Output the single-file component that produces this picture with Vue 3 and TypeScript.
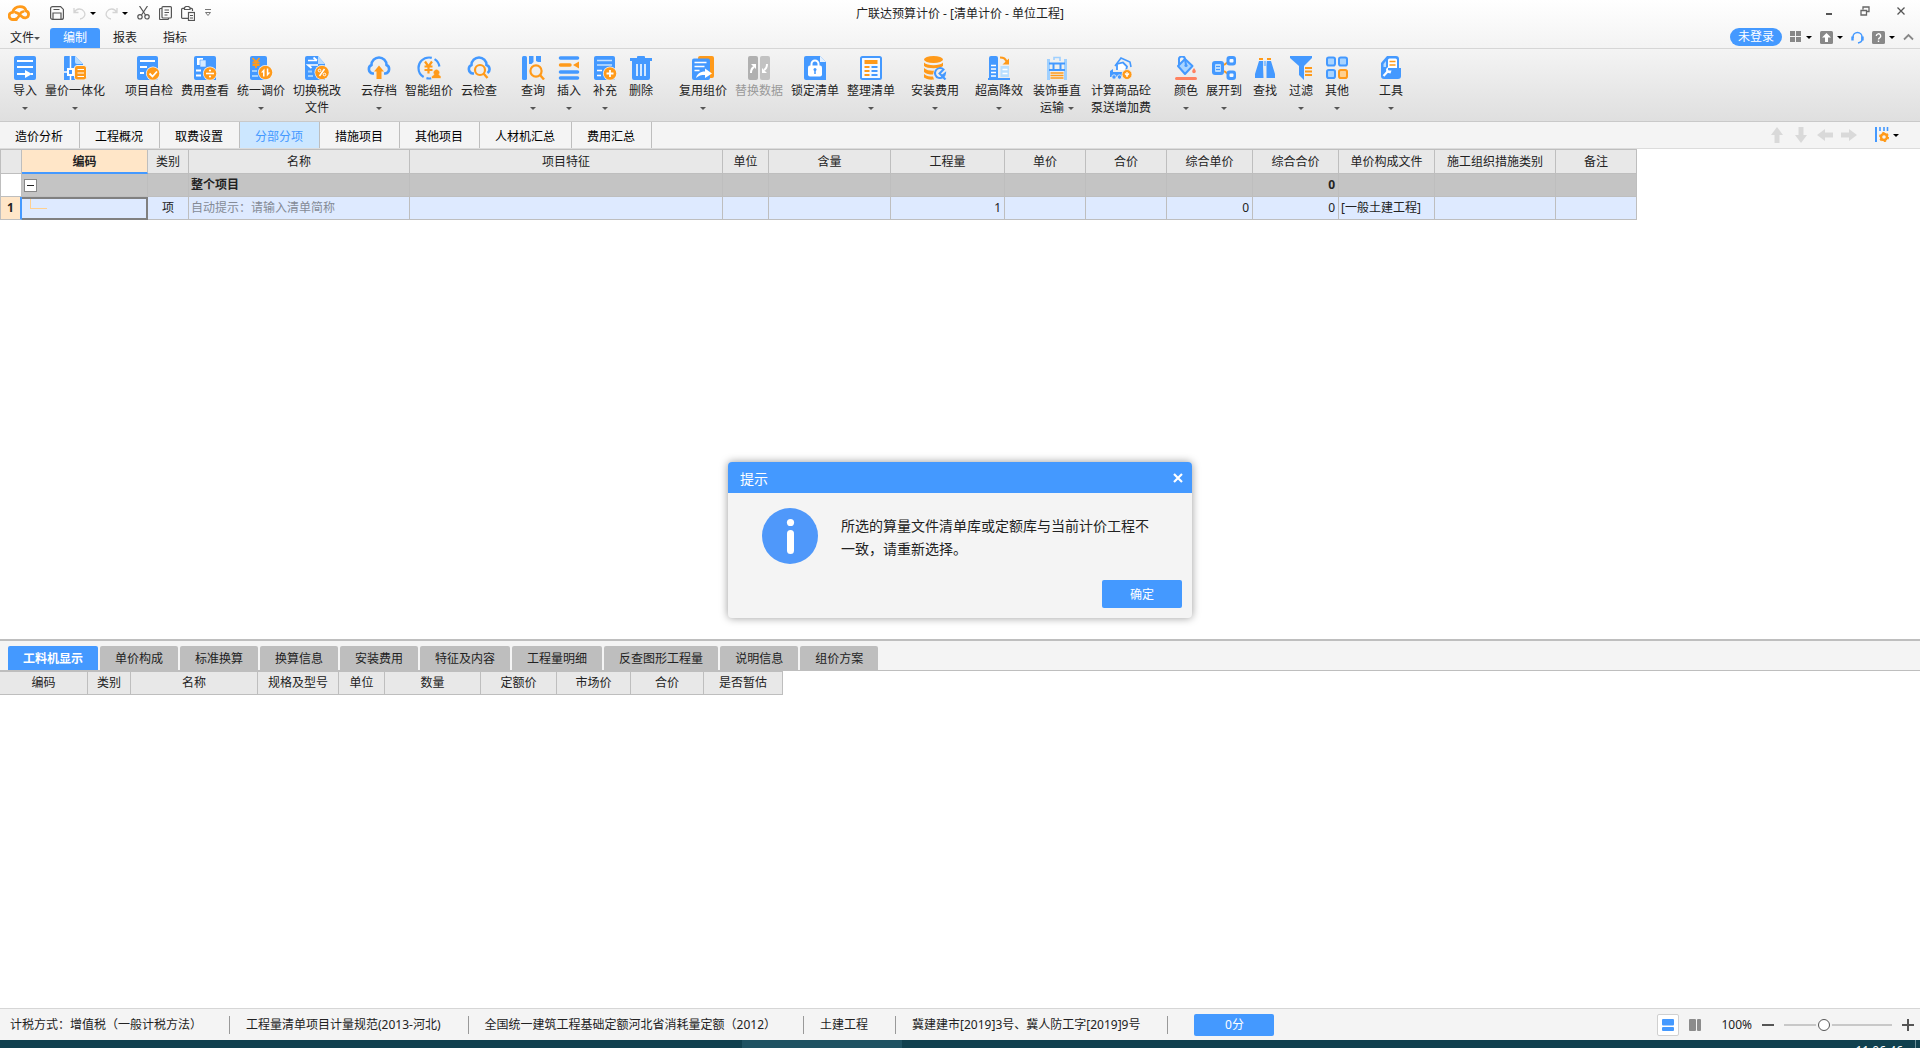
<script setup lang="ts">
import { ref } from 'vue'

interface Tool {
  icon: string
  label: string
  second?: string
  caret?: boolean
  off?: boolean
}

interface ToolGroup {
  gap: string
  tools: Tool[]
}

interface Column {
  label: string
  width: number
}

const menus = ['编制', '报表', '指标']
const activeMenu = ref('编制')

const groups: ToolGroup[] = [
  {
    gap: 'tight',
    tools: [
      { icon: 'import', label: '导入', caret: true },
      { icon: 'quantity', label: '量价一体化', caret: true },
    ],
  },
  {
    gap: 'tight',
    tools: [
      { icon: 'selfcheck', label: '项目自检' },
      { icon: 'feeview', label: '费用查看' },
      { icon: 'adjust', label: '统一调价', caret: true },
      { icon: 'tax', label: '切换税改', second: '文件' },
    ],
  },
  {
    gap: 'tight',
    tools: [
      { icon: 'cloudsave', label: '云存档', caret: true },
      { icon: 'smart', label: '智能组价' },
      { icon: 'cloudcheck', label: '云检查' },
    ],
  },
  {
    gap: 'wide',
    tools: [
      { icon: 'query', label: '查询', caret: true },
      { icon: 'insert', label: '插入', caret: true },
      { icon: 'append', label: '补充', caret: true },
      { icon: 'trash', label: '删除' },
    ],
  },
  {
    gap: 'tight',
    tools: [
      { icon: 'reuse', label: '复用组价', caret: true },
      { icon: 'replace', label: '替换数据', off: true },
      { icon: 'lock', label: '锁定清单' },
      { icon: 'arrange', label: '整理清单', caret: true },
    ],
  },
  { gap: 'tight', tools: [{ icon: 'install', label: '安装费用', caret: true }] },
  {
    gap: 'medium',
    tools: [
      { icon: 'height', label: '超高降效', caret: true },
      { icon: 'vertical', label: '装饰垂直', second: '运输', caret: true },
      { icon: 'concrete', label: '计算商品砼', second: '泵送增加费' },
    ],
  },
  {
    gap: 'tight',
    tools: [
      { icon: 'color', label: '颜色', caret: true },
      { icon: 'expand', label: '展开到', caret: true },
    ],
  },
  {
    gap: 'wide',
    tools: [
      { icon: 'find', label: '查找' },
      { icon: 'filter', label: '过滤', caret: true },
      { icon: 'other', label: '其他', caret: true },
    ],
  },
  { gap: 'tight', tools: [{ icon: 'toolbox', label: '工具', caret: true }] },
]

const modules = ['造价分析', '工程概况', '取费设置', '分部分项', '措施项目', '其他项目', '人材机汇总', '费用汇总']
const activeModule = ref('分部分项')

const columns: Column[] = [
  { label: '', width: 21 },
  { label: '编码', width: 126 },
  { label: '类别', width: 41 },
  { label: '名称', width: 221 },
  { label: '项目特征', width: 313 },
  { label: '单位', width: 46 },
  { label: '含量', width: 122 },
  { label: '工程量', width: 114 },
  { label: '单价', width: 81 },
  { label: '合价', width: 81 },
  { label: '综合单价', width: 86 },
  { label: '综合合价', width: 86 },
  { label: '单价构成文件', width: 96 },
  { label: '施工组织措施类别', width: 121 },
  { label: '备注', width: 81 },
]

const details = ['工料机显示', '单价构成', '标准换算', '换算信息', '安装费用', '特征及内容', '工程量明细', '反查图形工程量', '说明信息', '组价方案']
const activeDetail = ref('工料机显示')

const detailColumns: Column[] = [
  { label: '编码', width: 88 },
  { label: '类别', width: 43 },
  { label: '名称', width: 127 },
  { label: '规格及型号', width: 81 },
  { label: '单位', width: 46 },
  { label: '数量', width: 96 },
  { label: '定额价', width: 76 },
  { label: '市场价', width: 74 },
  { label: '合价', width: 73 },
  { label: '是否暂估', width: 79 },
]

const statuses = [
  '计税方式：增值税（一般计税方法）',
  '工程量清单项目计量规范(2013-河北)',
  '全国统一建筑工程基础定额河北省消耗量定额（2012）',
  '土建工程',
  '冀建建市[2019]3号、冀人防工字[2019]9号',
]

const showDialog = ref(true)
const zoomLevel = ref(35)
</script>

<template>
  <svg class="sheet" aria-hidden="true">
    <defs>
      <symbol id="i-import" viewBox="0 0 24 24">
        <rect x="1" width="22" height="24" rx="2" fill="#49f" />
        <path d="M4 5h16M4 11h16" stroke="#fff" stroke-width="2" />
        <path d="M4 18h9M18 18h2" stroke="#fff" stroke-width="2" />
        <path d="M12 14l7 4-7 4z" fill="#fff" />
      </symbol>
      <symbol id="i-quantity" viewBox="0 0 24 24">
        <path d="M1 1a1 1 0 0 1 1-1h10l8 8v16H1z" fill="#49f" />
        <path d="M12 0l8 8h-6a2 2 0 0 1-2-2z" fill="#b9dcff" />
        <path d="M7.500 0v24M1 16h12" stroke="#fff" stroke-width="1.500" />
        <path d="M4 12h7v8H4z" fill="#fff" />
        <path d="M6 14h3v4H6z" fill="#49f" />
        <rect x="11.500" y="9.500" width="12" height="14.500" rx="2.500" fill="#ff9a1a" stroke="#f2f2f2" />
        <path d="M14.500 13.500h6.500M14.500 17h6.500M14.500 20.500h6.500" stroke="#fff" stroke-width="1.200" />
      </symbol>
      <symbol id="i-selfcheck" viewBox="0 0 24 24">
        <rect width="21" height="24" rx="2" fill="#49f" />
        <path d="M3 5h15M3 11h7M3 17h4" stroke="#fff" stroke-width="2" />
        <circle cx="16" cy="17.500" r="7" fill="#f2f2f2" />
        <circle cx="16" cy="17.500" r="6.300" fill="#ff9a1a" />
        <path d="M12.500 17.500l3 3 4.500-5" fill="none" stroke="#fff" stroke-width="1.800" />
      </symbol>
      <symbol id="i-feeview" viewBox="0 0 24 24">
        <path d="M3 0h18a2 2 0 0 1 2 2v22H3a2 2 0 0 1-2-2V2a2 2 0 0 1 2-2z" fill="#49f" />
        <path d="M4 2h6v7H4z" fill="#fff" />
        <path d="M7 4h6v7H7z" fill="#d5eaff" stroke="#49f" stroke-width=".6" />
        <path d="M3 14.500h5M3 19.500h5" stroke="#fff" stroke-width="2" />
        <circle cx="17" cy="17.500" r="7" fill="#f2f2f2" />
        <circle cx="17" cy="17.500" r="6.300" fill="#ff9a1a" />
        <path d="M13 17.500h8" stroke="#fff" stroke-width="1.600" />
        <circle cx="17" cy="14.500" r="1.100" fill="#fff" />
        <circle cx="17" cy="20.500" r="1.100" fill="#fff" />
      </symbol>
      <symbol id="i-adjust" viewBox="0 0 24 24">
        <rect x="1" width="17" height="24" rx="2" fill="#49f" />
        <path d="M3.500 2l3.500 4 3.500-4M3.500 6.500h7M3.500 9h7M7 6v6" fill="none" stroke="#ff9a1a" stroke-width="1.800" />
        <path d="M3 15h5M3 20h6" stroke="#9fd0ff" stroke-width="2" />
        <circle cx="16.500" cy="16.500" r="7.500" fill="#f2f2f2" />
        <circle cx="16.500" cy="16.500" r="6.800" fill="#ff9a1a" />
        <path d="M15.500 12.500v8h-1.500v-4h-2zM17.800 20.500v-8h1.500v4h2z" fill="#fff" />
      </symbol>
      <symbol id="i-tax" viewBox="0 0 24 24">
        <path d="M0 2a2 2 0 0 1 2-2h11l7 8v16H2a2 2 0 0 1-2-2z" fill="#49f" />
        <path d="M13 0l7 8h-7z" fill="#b9dcff" />
        <path d="M3 4.500h9M8.500 1.500l3.500 3M13 9H3l3.500 3" fill="none" stroke="#fff" stroke-width="1.700" />
        <path d="M3 15.500h4M3 20h5" stroke="#9fd0ff" stroke-width="2" />
        <circle cx="17" cy="16.500" r="7.500" fill="#f2f2f2" />
        <circle cx="17" cy="16.500" r="6.800" fill="#ff9a1a" />
        <path d="M14.500 20l5-7" stroke="#fff" stroke-width="1.500" />
        <circle cx="14.500" cy="14.500" r="1.300" fill="none" stroke="#fff" />
        <circle cx="19.500" cy="18.500" r="1.300" fill="none" stroke="#fff" />
      </symbol>
      <symbol id="i-cloudsave" viewBox="0 0 24 24">
        <path d="M7 17.500H5.500A4.500 4.500 0 0 1 4.500 9 7.500 7.500 0 0 1 19.500 9a4.500 4.500 0 0 1-1 8.500H17" fill="none" stroke="#49f" stroke-width="2.600" />
        <path d="M12 9.500l5 6h-2.500V23h-5v-7.500H7z" fill="#ff9a1a" />
      </symbol>
      <symbol id="i-smart" viewBox="0 0 24 24">
        <circle cx="12" cy="12" r="10.500" fill="none" stroke="#49f" stroke-width="2.200" stroke-dasharray="0 14 5 3 30 3 9 2" />
        <path d="M8 5.500l3.500 5 3.500-5M7.500 10.500h8M7.500 14h8M11.500 10v7.500" fill="none" stroke="#ff9a1a" stroke-width="2.200" />
        <path d="M14.500 22.500v-2l2.500-2a3.200 3.200 0 1 1 5 0l2 2v2z" fill="#ff9a1a" stroke="#f0f0f0" stroke-width=".6" />
      </symbol>
      <symbol id="i-cloudcheck" viewBox="0 0 24 24">
        <path d="M7 17.500H5.500A4.500 4.500 0 0 1 4.500 9 7.500 7.500 0 0 1 19.500 9a4.500 4.500 0 0 1 1 8" fill="none" stroke="#49f" stroke-width="2.600" />
        <circle cx="13" cy="14" r="5" fill="none" stroke="#ff9a1a" stroke-width="2.200" />
        <path d="M16.500 17.500l4 4.500" stroke="#ff9a1a" stroke-width="2.400" />
      </symbol>
      <symbol id="i-query" viewBox="0 0 24 24">
        <rect x="1" width="5" height="24" rx="1.500" fill="#49f" />
        <path d="M8 0h4.500v6l-2 2H8zM15 0h5v6h-3l-2-1z" fill="#49f" />
        <circle cx="15" cy="15" r="5.600" fill="none" stroke="#ff9a1a" stroke-width="2.200" />
        <path d="M19 19l4 4.500" stroke="#ff9a1a" stroke-width="2.400" />
      </symbol>
      <symbol id="i-insert" viewBox="0 0 24 24">
        <path d="M3.500 2h17M3.500 16h17M3.500 22h17" stroke="#49f" stroke-width="3.600" stroke-linecap="round" />
        <path d="M3.500 9H13" stroke="#ff9a1a" stroke-width="3.400" stroke-linecap="round" />
        <path d="M16 9l6-3.500v7z" fill="#ff9a1a" />
      </symbol>
      <symbol id="i-append" viewBox="0 0 24 24">
        <rect x="1" width="21" height="24" rx="2" fill="#49f" />
        <path d="M4 4.500h15M4 9h15" stroke="#c5e2ff" stroke-width="1.600" />
        <path d="M4 14.500h5M4 19.500h4" stroke="#fff" stroke-width="1.600" />
        <circle cx="17" cy="17.500" r="7" fill="#f2f2f2" />
        <circle cx="17" cy="17.500" r="6.300" fill="#ff9a1a" />
        <path d="M13.500 17.500h7M17 14v7" stroke="#fff" stroke-width="1.800" />
      </symbol>
      <symbol id="i-trash" viewBox="0 0 24 24">
        <path d="M8 2V1a1 1 0 0 1 1-1h6a1 1 0 0 1 1 1v1h7v3H1V2zM3 5h18v17a2 2 0 0 1-2 2H5a2 2 0 0 1-2-2z" fill="#49f" />
        <path d="M8 8v12M12 8v12M16 8v12" stroke="#e4f1ff" stroke-width="1.800" />
      </symbol>
      <symbol id="i-reuse" viewBox="0 0 24 24">
        <rect x="7" width="16" height="22" rx="2" fill="#ff9a1a" />
        <rect x="1" y="2.500" width="18" height="21.500" rx="2" fill="#49f" />
        <path d="M3.500 6.500h12M3.500 10.500h10M3.500 14.500h5" stroke="#fff" stroke-width="1.600" />
        <path d="M5 22c1-4 4-6.500 9-6.500V12.500l7 5-7 4.500v-3c-4 0-6 .5-9 3z" fill="#fff" />
      </symbol>
      <symbol id="i-replace" viewBox="0 0 24 24">
        <rect x="1" width="10" height="24" rx="2" fill="#b0b0b0" />
        <rect x="13" width="10" height="24" rx="2" fill="#c2c2c2" />
        <path d="M4 17c0-4 1-5 3-6M20 8c0 4-1 5-3 6" fill="none" stroke="#fff" stroke-width="2" />
        <path d="M4 8h5v5zM15 17v-5l5 5z" fill="#fff" />
      </symbol>
      <symbol id="i-lock" viewBox="0 0 24 24">
        <path d="M1 2a2 2 0 0 1 2-2h14l6 6v18H3a2 2 0 0 1-2-2z" fill="#49f" />
        <path d="M17 0l6 6h-6z" fill="#e4f1ff" />
        <path d="M8.500 10V8a3.500 3.500 0 0 1 7 0v2" fill="none" stroke="#fff" stroke-width="2" />
        <rect x="5" y="9.500" width="14" height="11" rx="2" fill="#fff" />
        <circle cx="12" cy="13.500" r="1.500" fill="#49f" />
        <path d="M12 14v4" stroke="#49f" stroke-width="1.500" />
      </symbol>
      <symbol id="i-arrange" viewBox="0 0 24 24">
        <rect x="2" y="1" width="20" height="22" rx="1.500" fill="#f4f9ff" stroke="#49f" stroke-width="2" />
        <path d="M5.500 6h13" stroke="#ff9a1a" stroke-width="4" />
        <path d="M5.500 11h5M5.500 15h5M5.500 19h5" stroke="#ff9a1a" stroke-width="2" />
        <path d="M12.500 11h6M12.500 15h6M12.500 19h6" stroke="#49f" stroke-width="2" />
      </symbol>
      <symbol id="i-install" viewBox="0 0 24 24">
        <ellipse cx="10.500" cy="3.500" rx="9.500" ry="3.500" fill="#ff9a1a" />
        <path d="M1 6.500c3 3.500 16 3.500 19 0V10c-3 3-16 3-19 0zM1 12c3 3 9 3 10 2.500l-1 4c-4 0-7-.5-9-2.500zM1 18c3 2.500 6 2.500 9 2.500l1 3c-5 .5-8-.5-10-2z" fill="#ff9a1a" />
        <path d="M20.500 13.500A5 5 0 1 0 22 17.500l-3 2.500-2.500-2.500z" fill="none" stroke="#49f" stroke-width="2" />
        <path d="M18.500 19.500l4 4" stroke="#49f" stroke-width="2.200" />
      </symbol>
      <symbol id="i-height" viewBox="0 0 24 24">
        <path d="M2 2a2 2 0 0 1 2-2h5a2 2 0 0 1 2 2v20h12v2H1v-2h1z" fill="#49f" />
        <path d="M4 9.500h5M4 13h5M4 16.500h5M4 20h5" stroke="#fff" stroke-width="1.400" />
        <path d="M13.500 10h8.500v11h-8.500z" fill="#b9dfff" />
        <path d="M15.500 13.500h5M15.500 17.500h5" stroke="#fff" stroke-width="1.600" />
        <path d="M13 1.500c4 0 5 1 7 4.500" fill="none" stroke="#ff9a1a" stroke-width="2.200" />
        <path d="M22 2.500V8.500h-6.500z" fill="#ff9a1a" />
      </symbol>
      <symbol id="i-vertical" viewBox="0 0 24 24">
        <path d="M3.500 3v21M20.500 3v21" stroke="#9fd0ff" stroke-width="3" />
        <path d="M4 7.500h16M4 14h16M8.500 7v7M15.500 7v7" stroke="#49f" stroke-width="2" fill="none" />
        <path d="M5.500 17h13M5.500 19.500h13M5.500 22h13" stroke="#ff9a1a" stroke-width="1.500" />
        <path d="M9 4V1.500h6V5" fill="none" stroke="#9fd0ff" stroke-width="1.600" />
      </symbol>
      <symbol id="i-concrete" viewBox="0 0 24 24">
        <path d="M6 10l6-8 9 4 1 5" fill="none" stroke="#49f" stroke-width="1.600" />
        <path d="M8 14V8l6-1.500 4 4-1 4" fill="#fff" stroke="#49f" stroke-width="1.800" />
        <path d="M1 21v-6l3-2v3h9v5z" fill="#49f" />
        <circle cx="5" cy="21" r="2.200" fill="#49f" stroke="#f0f0f0" stroke-width=".8" />
        <circle cx="10.500" cy="21" r="2.200" fill="#49f" stroke="#f0f0f0" stroke-width=".8" />
        <circle cx="18" cy="18.500" r="5" fill="#ff9a1a" stroke="#f0f0f0" stroke-width=".8" />
        <path d="M18 16v5M16 17.500l2 2 2-2" fill="none" stroke="#fff" stroke-width="1.300" />
      </symbol>
      <symbol id="i-color" viewBox="0 0 24 24">
        <path d="M11 3l7.500 7-7.500 8-7-8z" fill="#a9d4ff" stroke="#49f" stroke-width="2" stroke-linejoin="round" />
        <path d="M5 9V4a3 3 0 0 1 6-1l1 6" fill="none" stroke="#49f" stroke-width="2" />
        <circle cx="12" cy="9.500" r="1.600" fill="#49f" />
        <path d="M20 12c1.500 2 1.800 2.600 1.800 3.400a1.800 1.800 0 0 1-3.600 0c0-.8.500-1.500 1.800-3.400z" fill="#ff8260" />
        <rect x="1" y="21" width="22" height="3" rx="1.500" fill="#ff8260" />
      </symbol>
      <symbol id="i-expand" viewBox="0 0 24 24">
        <path d="M12 9l4-3M12 15l4 3" stroke="#ff9a1a" stroke-width="2" />
        <rect x="0" y="5" width="12" height="14" rx="3" fill="#49f" />
        <rect x="3" y="8" width="6" height="8" rx="1" fill="#b9dcff" />
        <path d="M4 10.500h4M4 13.500h4" stroke="#49f" stroke-width="1.200" />
        <rect x="14.500" y="0" width="9.500" height="9.500" rx="3" fill="#49f" />
        <rect x="17.500" y="3" width="4" height="3.500" rx="1" fill="#f4f9ff" />
        <rect x="14.500" y="14.500" width="9.500" height="9.500" rx="3" fill="#49f" />
        <rect x="17.500" y="17.500" width="4" height="3.500" rx="1" fill="#f4f9ff" />
      </symbol>
      <symbol id="i-find" viewBox="0 0 24 24">
        <path d="M6 5h4v4l.5 13H2v-4zM14 5h4l4 13v4h-8.500V9z" fill="#49f" />
        <path d="M12 5v5" stroke="#8fc4ff" stroke-width="2.600" />
        <path d="M6 3h4M14 3h4" stroke="#ff9a1a" stroke-width="2" />
      </symbol>
      <symbol id="i-filter" viewBox="0 0 24 24">
        <path d="M1 0h22v2l-8 8v14l-5-5v-9L1 2z" fill="#49f" />
        <path d="M16 12h7M16 15.500h7M16 19h7" stroke="#ff9a1a" stroke-width="2" />
      </symbol>
      <symbol id="i-other" viewBox="0 0 24 24">
        <g fill="#a9d4ff" stroke="#49f" stroke-width="2">
          <rect x="2" y="1.500" width="8" height="8" rx="1.800" />
          <rect x="14" y="1.500" width="8" height="8" rx="1.800" />
          <rect x="2" y="14" width="8" height="8" rx="1.800" />
        </g>
        <rect x="14" y="14" width="8" height="8" rx="1.800" fill="#ffd08f" stroke="#ff9a1a" stroke-width="2" />
      </symbol>
      <symbol id="i-toolbox" viewBox="0 0 24 24">
        <path d="M2 7l6-7h9a3 3 0 0 1 3 3v10H2z" fill="#49f" />
        <path d="M9 4a1.500 1.500 0 0 1 1.500-1.500h6A1.500 1.500 0 0 1 18 4v8H9z" fill="#fff" />
        <path d="M10.500 5.500h6M10.500 9h6" stroke="#ff9a1a" stroke-width="1.600" />
        <path d="M4.500 8l2.500-3v6H4.500z" fill="#b9dcff" />
        <path d="M2 12h20v8a3 3 0 0 1-3 3H5a3 3 0 0 1-3-3z" fill="#49f" />
        <path d="M4.500 20l5-5.500" stroke="#fff" stroke-width="2.200" />
        <path d="M9 11v3.500h3.500l-1 3-4-1L7 13z" fill="#fff" />
      </symbol>
    </defs>
  </svg>

  <div class="app">
    <header class="top">
      <div class="titlebar">
        <div class="quick">
          <svg class="logo" viewBox="0 0 22 16" width="22" height="16">
            <path d="M8.500 14.500H5A3.500 3.500 0 0 1 4.500 7.300C5.500 4 8 1.600 12 1.600c3.500 0 5.500 1.500 6 4.200a3.600 3.600 0 0 1-.5 7c-2 .2-3.500-.8-5-2.300S9.500 7.600 7.500 7.300" fill="none" stroke="#ff9a1a" stroke-width="2.800" stroke-linecap="round" />
            <path d="M6.500 14.500c3-.5 4-2 5-4.500s2-3.200 4-3.500" fill="none" stroke="#ff9a1a" stroke-width="2.400" stroke-linecap="round" />
          </svg>
          <button class="flat save" aria-label="保存">
            <svg viewBox="0 0 14 14" width="14" height="14" fill="none" stroke="#555" stroke-width="1.200"><path d="M.6 2.600a2 2 0 0 1 2-2h8l2.800 2.800v8a2 2 0 0 1-2 2h-8.800a2 2 0 0 1-2-2zM3 13V7h8v6M3.500 3.500h6" /></svg>
          </button>
          <button class="flat" aria-label="撤销">
            <svg viewBox="0 0 13 13" width="13" height="13" fill="none" stroke="#d4d4d4" stroke-width="1.300"><path d="M1 1v4.500h4.500M1.500 5A5.500 5.500 0 0 1 11 4.500c2.500 4-1 7-4 7.500" /></svg>
            <i class="caret dark"></i>
          </button>
          <button class="flat" aria-label="恢复">
            <svg viewBox="0 0 13 13" width="13" height="13" fill="none" stroke="#d4d4d4" stroke-width="1.300"><path d="M12 1v4.500H7.500M11.500 5A5.500 5.500 0 0 0 2 4.500c-2.500 4 1 7 4 7.500" /></svg>
            <i class="caret dark"></i>
          </button>
          <button class="flat" aria-label="剪切">
            <svg viewBox="0 0 13 14" width="13" height="14" fill="none" stroke="#555" stroke-width="1.200"><path d="M2.500 0l6 9M10.500 0l-6 9" /><circle cx="3" cy="10.800" r="2.200" /><circle cx="10" cy="10.800" r="2.200" /></svg>
          </button>
          <button class="flat" aria-label="复制">
            <svg viewBox="0 0 13 14" width="13" height="14" fill="none" stroke="#555" stroke-width="1.200"><path d="M3 2.500H1.500a1 1 0 0 0-1 1v9a1 1 0 0 0 1 1h7a1 1 0 0 0 1-1V12" /><rect x="3" y=".6" width="9.400" height="11.400" rx="1" /><path d="M5.500 4h4.500M5.500 6.500h4.500M5.500 9h3" /></svg>
          </button>
          <button class="flat" aria-label="粘贴">
            <svg viewBox="0 0 14 15" width="14" height="15" fill="none" stroke="#555" stroke-width="1.200"><path d="M7 12.400H1.600a1 1 0 0 1-1-1v-8a1 1 0 0 1 1-1H3.500M9 2.400h1.500a1 1 0 0 1 1 1V5M3.500 1.500l1.500-1h2.500l1.500 1v2h-5.500z" /><rect x="7.500" y="6.500" width="6" height="8" /><path d="M9 9.500h3M9 12h3" /></svg>
          </button>
          <button class="flat" aria-label="自定义快速访问">
            <svg viewBox="0 0 8 8" width="8" height="8" fill="none" stroke="#777" stroke-width="1"><path d="M1 .5h6M1.500 3.500L4 6.500l2.500-3z" /></svg>
          </button>
        </div>
        <h1>广联达预算计价 - [清单计价 - 单位工程]</h1>
        <div class="window">
          <button class="flat" aria-label="最小化"><svg viewBox="0 0 10 10" width="10" height="10"><path d="M2 8h6" stroke="#555" stroke-width="2" /></svg></button>
          <button class="flat" aria-label="还原"><svg viewBox="0 0 10 10" width="10" height="10" fill="none" stroke="#666" stroke-width="1.300"><path d="M3 3.500V1h6v4.500H6.500M1 4.500h5.500v4.500H1z" /></svg></button>
          <button class="flat" aria-label="关闭"><svg viewBox="0 0 10 10" width="10" height="10"><path d="M1.500 1.500l7 7M8.500 1.500l-7 7" stroke="#555" stroke-width="1.300" /></svg></button>
        </div>
      </div>

      <div class="menubar">
        <nav>
          <button class="menu">文件<i class="caret"></i></button>
          <button v-for="m in menus" :key="m" class="menu" :class="{ active: m === activeMenu }" @click="activeMenu = m">{{ m }}</button>
        </nav>
        <div class="account">
          <button class="login">未登录</button>
          <button class="flat" aria-label="布局">
            <svg viewBox="0 0 12 12" width="12" height="12"><path d="M0 0h5v5H0zM6 0h5v5H6zM0 6h5v5H0zM6 6h5v5H6z" fill="#888" /></svg>
            <i class="caret dark"></i>
          </button>
          <button class="flat" aria-label="上传">
            <svg viewBox="0 0 13 13" width="13" height="13"><rect width="13" height="13" rx="1.500" fill="#888" /><path d="M6.500 2L11 6.500H8V11H5V6.500H2z" fill="#fff" /></svg>
            <i class="caret dark"></i>
          </button>
          <button class="flat" aria-label="客服">
            <svg viewBox="0 0 13 13" width="13" height="13" fill="none" stroke="#49f"><path d="M2 7V6a4.500 4.500 0 0 1 9 0v2.500c0 2-1.500 3-4 3.500" stroke-width="1.500" /><path d="M1.500 5.500v4M11.500 5.500v4" stroke-width="2.400" /></svg>
          </button>
          <button class="flat" aria-label="帮助">
            <svg viewBox="0 0 13 13" width="13" height="13"><rect width="13" height="13" rx="1.500" fill="#888" /><path d="M4.300 5a2.200 2.200 0 1 1 3.300 1.900q-1.100.6-1.100 1.600M6.500 9.500v1.500" fill="none" stroke="#fff" stroke-width="1.400" /></svg>
            <i class="caret dark"></i>
          </button>
          <button class="flat" aria-label="收起">
            <svg viewBox="0 0 11 8" width="11" height="8"><path d="M1 6.500l4.500-4.500L10 6.500" fill="none" stroke="#888" stroke-width="1.800" /></svg>
          </button>
        </div>
      </div>
    </header>

    <div class="ribbon">
      <div v-for="(g, gi) in groups" :key="gi" class="group" :class="g.gap">
        <button v-for="t in g.tools" :key="t.label" class="tool" :disabled="t.off">
          <svg class="glyph"><use :href="'#i-' + t.icon" /></svg>
          <span>{{ t.label }}</span>
          <span class="under">{{ t.second }}<i v-if="t.caret" class="caret" :class="{ after: t.second }"></i></span>
        </button>
      </div>
    </div>

    <div class="modules">
      <nav>
        <button v-for="m in modules" :key="m" :class="{ active: m === activeModule }" @click="activeModule = m">{{ m }}</button>
      </nav>
      <div class="moves">
        <button class="flat" aria-label="上移"><svg viewBox="0 0 16 16" width="16" height="16"><path d="M8 0l6 8h-3.500v8h-5V8H2z" fill="#d9d9d9" /></svg></button>
        <button class="flat" aria-label="下移"><svg viewBox="0 0 16 16" width="16" height="16"><path d="M8 16l6-8h-3.500V0h-5v8H2z" fill="#d9d9d9" /></svg></button>
        <button class="flat" aria-label="左移"><svg viewBox="0 0 16 16" width="16" height="16"><path d="M0 8l8-6v3.500h8v5H8V14z" fill="#d9d9d9" /></svg></button>
        <button class="flat" aria-label="右移"><svg viewBox="0 0 16 16" width="16" height="16"><path d="M16 8L8 2v3.500H0v5h8V14z" fill="#d9d9d9" /></svg></button>
        <button class="flat settings" aria-label="列设置">
          <svg viewBox="0 0 14 16" width="14" height="16">
            <path d="M1 0v15" stroke="#49f" stroke-width="2" />
            <path d="M5 0v4M9 0v4M12.500 0v4" stroke="#49f" stroke-width="1.600" />
            <circle cx="9" cy="10" r="3" fill="none" stroke="#ff9a1a" stroke-width="2.400" />
            <circle cx="9" cy="10" r="4.300" fill="none" stroke="#ff9a1a" stroke-width="1.500" stroke-dasharray="2.200 2.300" />
          </svg>
          <i class="caret dark"></i>
        </button>
      </div>
    </div>

    <main class="upper">
      <table class="grid main">
        <colgroup><col v-for="(c, i) in columns" :key="i" :style="{ width: c.width + 'px' }" /></colgroup>
        <thead>
          <tr><th v-for="(c, i) in columns" :key="i" :class="{ current: i === 1 }">{{ c.label }}</th></tr>
        </thead>
        <tbody>
          <tr class="total">
            <td class="rowno"></td>
            <td class="tree"><button class="fold" aria-label="折叠"></button></td>
            <td></td>
            <td>整个项目</td>
            <td></td><td></td><td></td><td></td><td></td><td></td><td></td>
            <td class="num">0</td>
            <td></td><td></td><td></td>
          </tr>
          <tr class="picked">
            <td class="rowno">1</td>
            <td class="cell"><i class="branch"></i></td>
            <td class="mid">项</td>
            <td class="hint">自动提示：请输入清单简称</td>
            <td></td><td></td><td></td>
            <td class="num">1</td>
            <td></td><td></td>
            <td class="num">0</td>
            <td class="num">0</td>
            <td>[一般土建工程]</td>
            <td></td><td></td>
          </tr>
        </tbody>
      </table>
    </main>

    <section class="lower">
      <nav class="details">
        <button v-for="d in details" :key="d" :class="{ active: d === activeDetail }" @click="activeDetail = d">{{ d }}</button>
      </nav>
      <table class="grid sub">
        <colgroup><col v-for="c in detailColumns" :key="c.label" :style="{ width: c.width + 'px' }" /></colgroup>
        <thead><tr><th v-for="c in detailColumns" :key="c.label">{{ c.label }}</th></tr></thead>
      </table>
    </section>

    <footer class="status">
      <span v-for="s in statuses" :key="s" class="info">{{ s }}</span>
      <button class="score">0分</button>
      <div class="view">
        <button class="flat framed" aria-label="上下布局"><svg viewBox="0 0 12 12" width="12" height="12"><rect width="12" height="6.500" rx="1" fill="#49f" /><rect y="8" width="12" height="4" rx="1" fill="#49f" /></svg></button>
        <button class="flat" aria-label="左右布局"><svg viewBox="0 0 12 12" width="12" height="12"><rect width="7" height="12" rx="1" fill="#8c8c8c" /><rect x="8" width="4" height="12" rx="1" fill="#8c8c8c" /></svg></button>
        <label for="zoom">100%</label>
        <button class="flat" aria-label="缩小"><svg viewBox="0 0 12 12" width="12" height="12"><path d="M0 6h12" stroke="#555" stroke-width="2" /></svg></button>
        <input id="zoom" v-model="zoomLevel" type="range" min="0" max="100" />
        <button class="flat" aria-label="放大"><svg viewBox="0 0 12 12" width="12" height="12"><path d="M0 6h12M6 0v12" stroke="#555" stroke-width="2" /></svg></button>
      </div>
    </footer>

    <div class="taskbar"><i class="running"></i><time>11:06:46</time></div>

    <div v-if="showDialog" class="dialog" role="dialog" aria-labelledby="dialog-title">
      <div class="caption">
        <h2 id="dialog-title">提示</h2>
        <button class="flat" aria-label="关闭提示" @click="showDialog = false"><svg viewBox="0 0 10 10" width="10" height="10"><path d="M1 1l8 8M9 1L1 9" stroke="#fff" stroke-width="2.200" /></svg></button>
      </div>
      <div class="message">
        <svg viewBox="0 0 56 56" width="56" height="56"><circle cx="28" cy="28" r="28" fill="#4f98fa" /><circle cx="28.500" cy="14.500" r="3.600" fill="#fff" /><rect x="25" y="22" width="7" height="24" rx="3.500" fill="#fff" /></svg>
        <p>所选的算量文件清单库或定额库与当前计价工程不一致，请重新选择。</p>
      </div>
      <div class="actions"><button class="ok" @click="showDialog = false">确定</button></div>
    </div>
  </div>
</template>

<style>
body {
  background: #fff;
}
</style>

<style scoped>
.sheet {
  position: absolute;
  width: 0;
  height: 0;
}

.app {
  position: relative;
  display: flex;
  flex-direction: column;
  height: 100vh;
  overflow: hidden;
  color: #222;
  font: 12px/18px "Noto Sans", "Noto Sans CJK SC", sans-serif;
}

button {
  margin: 0;
  padding: 0;
  border: 0;
  background: none;
  color: inherit;
  font: inherit;
  white-space: nowrap;
}

svg {
  display: block;
  flex: none;
}

h1,
h2,
p {
  margin: 0;
  font-size: 12px;
  font-weight: 400;
}

h1 {
  padding-top: 2px;
}

.flat {
  display: flex;
  align-items: center;
}

.caret {
  display: inline-block;
  width: 0;
  height: 0;
  border: 3px solid transparent;
  border-top-color: #555;
  border-bottom: 0;
}

.caret.dark {
  border-top-color: #000;
}

.top {
  flex: none;
  border-bottom: 1px solid #d6d6d6;
  background: linear-gradient(#fff, #f3f3f3);
}

.titlebar {
  display: grid;
  grid-template-columns: 1fr auto 1fr;
  align-items: center;
  height: 26px;
}

.quick {
  display: flex;
  align-items: center;
  gap: 9px;
  height: 24px;
  padding-left: 8px;
}

.quick .flat,
.account .flat {
  gap: 4px;
}

.quick .save {
  margin-left: 11px;
}

.window {
  display: flex;
  justify-content: flex-end;
  gap: 26px;
  padding: 0 14px 4px 0;
}

.menubar {
  display: flex;
  justify-content: space-between;
  height: 22px;
}

.menubar nav {
  display: flex;
  align-items: flex-end;
}

.menu {
  display: flex;
  align-items: center;
  justify-content: center;
  width: 50px;
  height: 20px;
  border-radius: 3px 3px 0 0;
}

.menu.active {
  background: #49f;
  color: #fff;
}

.account {
  display: flex;
  align-items: center;
  gap: 8px;
  padding-right: 6px;
}

.login {
  height: 18px;
  padding: 0 8px;
  border-radius: 9px;
  background: #49f;
  color: #fff;
}

.ribbon {
  display: grid;
  flex: none;
  grid-template-columns: 112px 236px 160px 158px 232px 64px 199px 79px 126px auto;
  height: 65px;
  padding: 7px 0 0 13px;
  border-bottom: 1px solid #c9c9c9;
  background: linear-gradient(#f4f4f4, #dfdfdf);
}

.group {
  display: flex;
  align-items: flex-start;
}

.tight {
  gap: 8px;
}

.medium {
  gap: 10px;
}

.wide {
  gap: 12px;
}

.tool {
  display: flex;
  flex-direction: column;
  align-items: center;
}

.tool:disabled {
  color: #999;
}

.glyph {
  width: 24px;
  height: 24px;
  margin-bottom: 2px;
}

.under {
  display: flex;
  align-items: center;
  height: 16px;
}

.caret.after {
  margin-left: 4px;
}

.modules {
  display: flex;
  flex: none;
  justify-content: space-between;
  height: 26px;
  border-bottom: 1px solid #dcdcdc;
  background: #f4f4f4;
}

.modules nav {
  display: flex;
}

.modules nav button {
  padding: 4px 16px 0 15px;
  border-right: 1px solid #bebebe;
  color: #000;
}

.modules nav .active {
  background: #cce7ff;
  color: #49f;
}

.moves {
  display: flex;
  align-items: center;
  gap: 8px;
  padding-right: 21px;
}

.settings {
  gap: 4px;
  margin-left: 10px;
}

.upper {
  flex: 490 1 0;
  min-height: 0;
  overflow: hidden;
}

.grid {
  border-collapse: separate;
  border-spacing: 0;
  border-top: 1px solid #bebebe;
}

.grid.main {
  border-left: 1px solid #bebebe;
}

.grid th,
.grid td {
  box-sizing: border-box;
  padding: 0 1px;
  border: solid #bebebe;
  border-width: 0 1px 1px 0;
  white-space: nowrap;
}

.grid th {
  height: 24px;
  background: #e8e8e8;
  font-weight: 400;
  text-align: center;
}

.grid td {
  height: 23px;
  padding: 0 2px;
}

.grid.sub th {
  height: 23px;
}

.grid .current {
  padding-top: 2px;
  border-bottom: 2px solid #49f;
  background: #ffe6c8;
  font-weight: 700;
}

.total td {
  background: #c4c4c4;
  font-weight: 700;
}

.picked td {
  background: #deeaff;
}

.grid .num {
  padding-right: 3px;
  text-align: right;
}

.grid .mid {
  text-align: center;
}

.grid .hint {
  color: #858b96;
}

.total .rowno {
  background: #fff;
}

.picked .rowno {
  border-right: 2px solid #49f;
  background: #ffe6c8;
  font-weight: 700;
  text-align: center;
}

.fold {
  position: relative;
  display: block;
  width: 13px;
  height: 13px;
  border: 1px solid #888;
  background: #fff;
}

.fold::after {
  position: absolute;
  top: 5px;
  left: 2px;
  width: 7px;
  height: 1px;
  background: #222;
  content: "";
}

.grid .cell {
  padding: 0 8px;
  border: 2px solid #808080;
  border-left: 0;
  vertical-align: top;
}

.branch {
  display: block;
  width: 16px;
  height: 9px;
  border: solid #ffd08f;
  border-width: 0 0 1px 1px;
}

.lower {
  flex: 367 1 0;
  min-height: 0;
  border-top: 2px solid #bebebe;
  overflow: hidden;
}

.details {
  display: flex;
  gap: 2px;
  padding: 5px 8px 0;
  border-bottom: 1px solid #bebebe;
  background: #f4f4f4;
}

.details button {
  height: 24px;
  padding: 2px 15px 0;
  border-radius: 2px 2px 0 0;
  background: #bebebe;
}

.details .active {
  background: #49f;
  color: #fff;
  font-weight: 700;
}

.status {
  display: flex;
  flex: none;
  align-items: center;
  height: 31px;
  padding-left: 10px;
  border-top: 1px solid #d6d6d6;
  background: #f4f4f4;
}

.info {
  margin-right: 16px;
  padding-right: 27px;
  border-right: 1px solid #999;
}

.score {
  width: 80px;
  height: 22px;
  margin-left: 10px;
  border-radius: 2px;
  background: #49f;
  color: #fff;
}

.view {
  display: flex;
  align-items: center;
  gap: 10px;
  margin-left: auto;
  padding-right: 6px;
}

.view label {
  margin-left: 10px;
}

.framed {
  justify-content: center;
  width: 22px;
  height: 22px;
  border: 1px solid #d0d0d0;
  border-radius: 2px;
  background: #fff;
}

input[type="range"] {
  width: 108px;
  height: 16px;
  margin: 0;
  appearance: none;
  background: linear-gradient(#c8c8c8, #c8c8c8) center / 100% 2px no-repeat;
}

input[type="range"]::-webkit-slider-thumb {
  width: 12px;
  height: 12px;
  border: 1px solid #555;
  border-radius: 50%;
  appearance: none;
  background: #fff;
  box-shadow: 0 0 0 2px #f4f4f4;
}

.taskbar {
  display: flex;
  flex: none;
  justify-content: space-between;
  height: 8px;
  padding-right: 4px;
  overflow: hidden;
  background: #10404e;
}

.running {
  width: 160px;
  margin-left: 742px;
  background: #1f5262;
}

time {
  padding: 2px 12px 0 0;
  border-right: 1px solid #6d8f99;
  color: #fff;
}

.dialog {
  position: absolute;
  top: 462px;
  left: 50%;
  width: 464px;
  border-radius: 4px;
  background: #f4f4f4;
  box-shadow: 0 0 8px rgba(0, 0, 0, 0.4);
  transform: translateX(-50%);
}

.caption {
  display: flex;
  align-items: center;
  justify-content: space-between;
  height: 31px;
  padding: 0 9px 0 12px;
  border-radius: 4px 4px 0 0;
  background: #49f;
  color: #fff;
}

.caption h2 {
  padding-top: 2px;
  font-size: 14px;
}

.message {
  display: flex;
  gap: 23px;
  padding: 15px 34px 0;
}

.message p {
  width: 310px;
  padding-top: 6px;
  font-size: 14px;
  line-height: 23px;
}

.actions {
  display: flex;
  justify-content: flex-end;
  padding: 16px 10px 10px;
}

.ok {
  width: 80px;
  height: 28px;
  padding-top: 2px;
  border-radius: 2px;
  background: #49f;
  color: #fff;
}
</style>
